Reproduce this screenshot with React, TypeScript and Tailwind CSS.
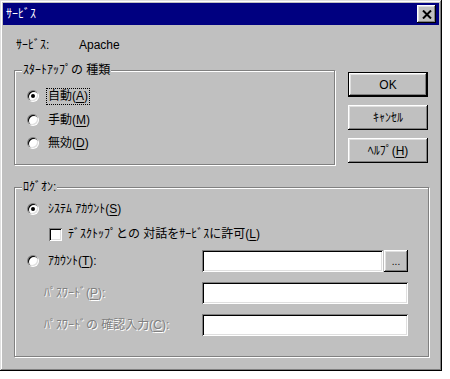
import React from "react";

const raised =
  "shadow-[inset_-1px_-1px_#000,inset_1px_1px_#fff,inset_-2px_-2px_#808080,inset_2px_2px_#dfdfdf]";
const sunken =
  "shadow-[inset_1px_1px_#808080,inset_-1px_-1px_#fff,inset_2px_2px_#000,inset_-2px_-2px_#dfdfdf]";
const disabled = "text-[#808080] [text-shadow:1px_1px_0_#fff]";

function Radio({ checked }: { checked?: boolean }) {
  return (
    <div className="w-[12px] h-[12px] rounded-full flex items-center justify-center shadow-[inset_1px_1px_#808080,inset_-1px_-1px_#fff] shrink-0">
      <div className="w-[10px] h-[10px] rounded-full bg-white flex items-center justify-center shadow-[inset_1px_1px_#000,inset_-1px_-1px_#dfdfdf]">
        {checked && <div className="w-[4px] h-[4px] rounded-full bg-black" />}
      </div>
    </div>
  );
}

function Checkbox() {
  return <div className={`w-[13px] h-[13px] bg-white shrink-0 ${sunken}`} />;
}

function U({ c }: { c: string }) {
  return <span className="underline underline-offset-[2px]">{c}</span>;
}

function Group({
  label,
  className,
  children,
}: {
  label: string;
  className: string;
  children: React.ReactNode;
}) {
  return (
    <div
      className={`relative border border-[#808080] shadow-[1px_1px_0_#fff,inset_1px_1px_0_#fff] ${className}`}
    >
      <div className="absolute left-[7px] top-[-9px] px-[1px] bg-[#c0c0c0] leading-[16px]">
        {label}
      </div>
      {children}
    </div>
  );
}

function Button({
  children,
  isDefault,
}: {
  children: React.ReactNode;
  isDefault?: boolean;
}) {
  if (isDefault) {
    return (
      <div className="w-[80px] h-[25px] border border-black flex">
        <div
          className={`flex-1 flex items-center justify-center ${raised}`}
        >
          {children}
        </div>
      </div>
    );
  }
  return (
    <div
      className={`w-[80px] h-[25px] flex items-center justify-center ${raised}`}
    >
      {children}
    </div>
  );
}

function Field({ w }: { w: string }) {
  return <div className={`${w} h-[22px] bg-white ${sunken}`} />;
}

export default function App() {
  return (
    <div className="w-[450px] h-[379px] bg-white font-['Liberation_Sans','Noto_Sans_CJK_JP',sans-serif] text-[12px] text-black">
      <div className="w-[442px] h-[371px] bg-[#c0c0c0] p-[3px] flex flex-col shadow-[inset_-1px_-1px_#000,inset_1px_1px_#dfdfdf,inset_-2px_-2px_#808080,inset_2px_2px_#fff]">
        {/* Title bar */}
        <div className="h-[22px] bg-[#000080] flex items-center justify-between pl-[3px] pr-[3px]">
          <span className="text-white leading-[16px]">ｻｰﾋﾞｽ</span>
          <div
            className={`w-[19px] h-[18px] bg-[#c0c0c0] flex items-center justify-center ${raised}`}
          >
            <svg width="10" height="9" viewBox="0 0 10 9">
              <path
                d="M1 0.5 L9 8.5 M9 0.5 L1 8.5"
                stroke="#000"
                strokeWidth="2"
                fill="none"
              />
            </svg>
          </div>
        </div>

        {/* Body */}
        <div className="flex flex-col px-[11px]">
          <div className="mt-[12px] h-[16px] pl-[2px] flex items-center leading-[16px]">
            <span className="w-[63px]">ｻｰﾋﾞｽ:</span>
            <span>Apache</span>
          </div>

          <div className="mt-[17px] flex">
            <Group label="ｽﾀｰﾄｱｯﾌﾟの 種類" className="w-[322px] h-[95px]">
              <div className="flex flex-col pl-[12px]">
                <div className="mt-[15px] h-[20px] flex items-center">
                  <Radio checked />
                  <div className="ml-[7px] border border-dotted border-black px-[1px] leading-[15px]">
                    自動(<U c="A" />)
                  </div>
                </div>
                <div className="mt-[4px] h-[20px] flex items-center">
                  <Radio />
                  <span className="ml-[9px] leading-[16px]">
                    手動(<U c="M" />)
                  </span>
                </div>
                <div className="mt-[3px] h-[20px] flex items-center">
                  <Radio />
                  <span className="ml-[9px] leading-[16px]">
                    無効(<U c="D" />)
                  </span>
                </div>
              </div>
            </Group>
            <div className="ml-[13px] mt-[2px] flex flex-col gap-[8px]">
              <Button isDefault>OK</Button>
              <Button>ｷｬﾝｾﾙ</Button>
              <Button>
                ﾍﾙﾌﾟ(<U c="H" />)
              </Button>
            </div>
          </div>

          <Group label="ﾛｸﾞｵﾝ:" className="mt-[22px] w-[415px] h-[170px]">
            <div className="flex flex-col">
              <div className="mt-[11px] h-[20px] pl-[12px] flex items-center">
                <Radio checked />
                <span className="ml-[9px] leading-[16px]">
                  ｼｽﾃﾑ ｱｶｳﾝﾄ(<U c="S" />)
                </span>
              </div>
              <div className="mt-[5px] h-[20px] pl-[34px] flex items-center">
                <Checkbox />
                <span className="ml-[6px] leading-[16px]">
                  ﾃﾞｽｸﾄｯﾌﾟとの 対話をｻｰﾋﾞｽに許可(<U c="L" />)
                </span>
              </div>
              <div className="mt-[6px] h-[22px] flex items-center">
                <div className="w-[187px] pl-[12px] flex items-center">
                  <Radio />
                  <span className="ml-[9px] leading-[16px]">
                    ｱｶｳﾝﾄ(<U c="T" />):
                  </span>
                </div>
                <Field w="w-[181px]" />
                <div
                  className={`ml-[1px] w-[24px] h-[22px] flex items-center justify-center text-[10px] ${raised}`}
                >
                  ...
                </div>
              </div>
              <div className="mt-[10px] h-[22px] flex items-center">
                <div className={`w-[187px] pl-[29px] leading-[16px] ${disabled}`}>
                  ﾊﾟｽﾜｰﾄﾞ(<U c="P" />):
                </div>
                <Field w="w-[206px]" />
              </div>
              <div className="mt-[10px] h-[22px] flex items-center">
                <div className={`w-[187px] pl-[29px] leading-[16px] ${disabled}`}>
                  ﾊﾟｽﾜｰﾄﾞの 確認入力(<U c="C" />):
                </div>
                <Field w="w-[206px]" />
              </div>
            </div>
          </Group>
        </div>
      </div>
    </div>
  );
}
